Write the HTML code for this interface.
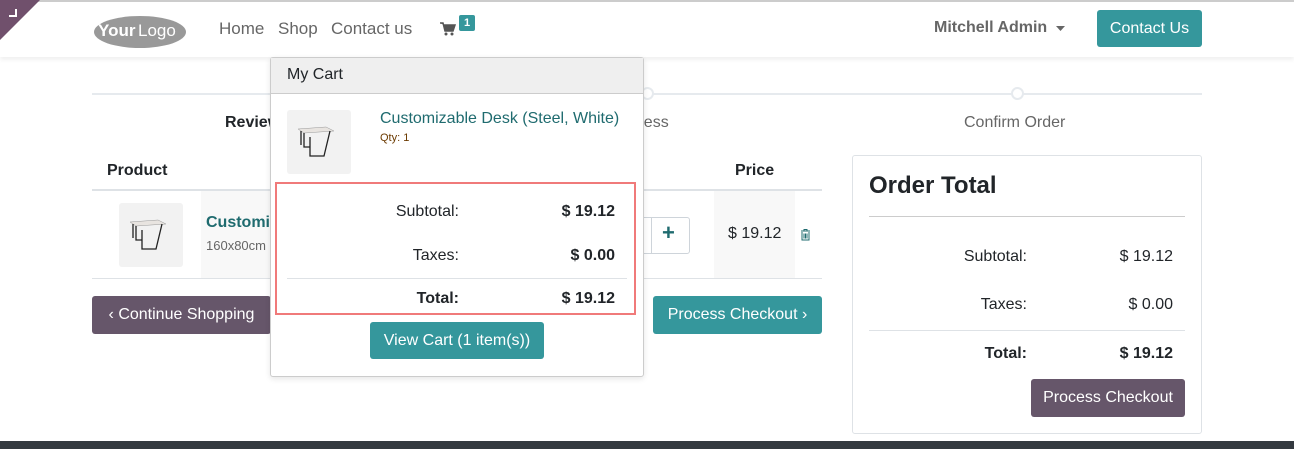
<!DOCTYPE html>
<html><head><meta charset="utf-8"><style>
*{box-sizing:border-box;margin:0;padding:0}
body{width:1294px;height:449px;overflow:hidden;background:#fff;font-family:"Liberation Sans","DejaVu Sans",sans-serif;color:#212529;position:relative;font-size:15px}
.a{position:absolute;white-space:nowrap}
.nav{position:absolute;left:0;top:0;width:1294px;height:57px;border-top:2px solid #ccc;box-shadow:0 3px 4px rgba(0,0,0,.06)}
.btn{position:absolute;color:#fff;border-radius:3px;display:flex;align-items:center;justify-content:center;font-size:16px}
.teal{background:#35979c}
.purp{background:#66566a}
.r{text-align:right}
</style></head><body>
<div class="nav"></div>
<svg class="a" style="left:0;top:0" width="40" height="40"><polygon points="0,0 40,0 0,40" fill="#70506c"/><path d="M16 9V16H9" stroke="#fff" stroke-width="2" fill="none"/></svg>
<svg class="a" style="left:92px;top:12px" width="96" height="38"><ellipse cx="48" cy="20" rx="46" ry="16" fill="#999"/><text x="6" y="24" font-family="Liberation Sans" font-size="17" font-weight="bold" fill="#fff">Your</text><text x="46" y="24" font-family="Liberation Sans" font-size="17" fill="#fff">Logo</text></svg>
<div class="a" style="left:219px;top:19px;font-size:17px;color:#666">Home</div>
<div class="a" style="left:278px;top:19px;font-size:17px;color:#666">Shop</div>
<div class="a" style="left:331px;top:19px;font-size:17px;color:#666">Contact us</div>
<svg class="a" style="left:440px;top:22px" width="16" height="14"><path d="M0 1H3L5 9H13L15 3H4" fill="#555" stroke="#555" stroke-width="1.5"/><circle cx="6" cy="12" r="1.5" fill="#555"/><circle cx="12" cy="12" r="1.5" fill="#555"/></svg>
<div class="a" style="left:459px;top:15px;width:16px;height:16px;background:#35979c;border-radius:2px;color:#fff;font-size:11px;font-weight:bold;text-align:center;line-height:16px">1</div>
<div class="a" style="left:934px;top:19px;font-size:16px;font-weight:bold;color:#666">Mitchell Admin</div>
<svg class="a" style="left:1056px;top:26px" width="10" height="6"><path d="M0 0H9L4.5 5Z" fill="#666"/></svg>
<div class="btn teal" style="left:1097px;top:10px;width:105px;height:37px">Contact Us</div>

<div class="a" style="left:92px;top:93px;width:1110px;height:2px;background:#e6eaee"></div>
<div class="a" style="left:641px;top:87px;width:13px;height:13px;border:2px solid #e6eaee;border-radius:50%;background:#fff"></div>
<div class="a" style="left:1011px;top:87px;width:13px;height:13px;border:2px solid #e6eaee;border-radius:50%;background:#fff"></div>
<div class="a" style="left:225px;top:114px;font-size:16px;font-weight:bold">Review Order</div>
<div class="a" style="left:610px;top:114px;font-size:16px;color:#666">Address</div>
<div class="a" style="left:964px;top:114px;font-size:16px;color:#666">Confirm Order</div>

<div class="a" style="left:107px;top:162px;font-size:16px;font-weight:bold">Product</div>
<div class="a" style="left:620px;top:162px;font-size:16px;font-weight:bold">ity</div>
<div class="a" style="left:735px;top:162px;font-size:16px;font-weight:bold">Price</div>
<div class="a" style="left:92px;top:189px;width:730px;height:2px;background:#dee2e6"></div>
<div class="a" style="left:201px;top:191px;width:80px;height:88px;background:#f8f8f8"></div>
<div class="a" style="left:714px;top:191px;width:81px;height:88px;background:#f8f8f8"></div>
<div class="a" style="left:119px;top:203px;width:64px;height:64px;background:#f2f2f2;border-radius:3px"></div>
<svg class="a" style="left:128px;top:218px" width="46" height="34"><path d="M2 4L30 2L38 6L8 8Z" fill="#e8e4e0" stroke="#999" stroke-width=".5"/><path d="M5 6V20M8 8V22H14M14 12V31H28L34 6" stroke="#222" stroke-width="1.3" fill="none"/></svg>
<div class="a" style="left:206px;top:214px;font-size:16px;font-weight:bold;color:#1f6b6f">Customiz</div>
<div class="a" style="left:206px;top:238px;font-size:13px;color:#666">160x80cm</div>
<div class="a" style="left:640px;top:217px;width:50px;height:37px;border:1px solid #ced4da;border-radius:0 3px 3px 0"></div>
<div class="a" style="left:651px;top:217px;width:1px;height:37px;background:#ced4da"></div>
<div class="a" style="left:662px;top:220px;font-size:22px;font-weight:bold;color:#1f6b6f">+</div>
<div class="a" style="left:728px;top:225px;font-size:16px">$ 19.12</div>
<svg class="a" style="left:800px;top:229px" width="11" height="12"><path d="M1 2H10M4 2V0.5H7V2M2 3V11H9V3M4 4.5V9.5M5.5 4.5V9.5M7 4.5V9.5" stroke="#1f6b6f" stroke-width="1" fill="none"/></svg>
<div class="a" style="left:92px;top:278px;width:730px;height:1px;background:#dee2e6"></div>
<div class="btn purp" style="left:92px;top:296px;width:179px;height:38px">‹ Continue Shopping</div>
<div class="btn teal" style="left:653px;top:296px;width:169px;height:38px">Process Checkout ›</div>

<div class="a" style="left:852px;top:155px;width:350px;height:279px;border:1px solid #dee2e6;border-radius:3px"></div>
<div class="a" style="left:869px;top:172px;font-size:24px;font-weight:bold">Order Total</div>
<div class="a" style="left:869px;top:216px;width:316px;height:1px;background:#ccc"></div>
<div class="a r" style="left:900px;top:248px;width:127px;font-size:16px">Subtotal:</div>
<div class="a r" style="left:1080px;top:248px;width:93px;font-size:16px">$ 19.12</div>
<div class="a r" style="left:900px;top:296px;width:127px;font-size:16px">Taxes:</div>
<div class="a r" style="left:1080px;top:296px;width:93px;font-size:16px">$ 0.00</div>
<div class="a" style="left:869px;top:330px;width:316px;height:1px;background:#dee2e6"></div>
<div class="a r" style="left:900px;top:345px;width:127px;font-size:16px;font-weight:bold">Total:</div>
<div class="a r" style="left:1080px;top:345px;width:93px;font-size:16px;font-weight:bold">$ 19.12</div>
<div class="btn purp" style="left:1031px;top:379px;width:154px;height:38px">Process Checkout</div>

<div class="a" style="left:0;top:441px;width:1294px;height:8px;background:#343a40"></div>

<div class="a" style="left:270px;top:57px;width:374px;height:320px;background:#fff;border:1px solid #ccc;border-radius:3px;box-shadow:0 2px 6px rgba(0,0,0,.1)"></div>
<div class="a" style="left:271px;top:58px;width:372px;height:36px;background:#efefef;border-bottom:1px solid #ccc"></div>
<div class="a" style="left:287px;top:66px;font-size:16px">My Cart</div>
<div class="a" style="left:287px;top:110px;width:64px;height:64px;background:#f2f2f2;border-radius:3px"></div>
<svg class="a" style="left:296px;top:125px" width="46" height="34"><path d="M2 4L30 2L38 6L8 8Z" fill="#e8e4e0" stroke="#999" stroke-width=".5"/><path d="M5 6V20M8 8V22H14M14 12V31H28L34 6" stroke="#222" stroke-width="1.3" fill="none"/></svg>
<div class="a" style="left:380px;top:110px;font-size:16px;color:#1f6b6f">Customizable Desk (Steel, White)</div>
<div class="a" style="left:380px;top:132px;font-size:11px;color:#6b3a00">Qty: 1</div>
<div class="a" style="left:287px;top:182px;width:340px;height:1px;background:#e6e6e6"></div>
<div class="a" style="left:275px;top:182px;width:361px;height:133px;border:2px solid #f07a7a"></div>
<div class="a r" style="left:300px;top:203px;width:159px;font-size:16px">Subtotal:</div>
<div class="a r" style="left:500px;top:203px;width:115px;font-size:16px;font-weight:bold">$ 19.12</div>
<div class="a r" style="left:300px;top:247px;width:159px;font-size:16px">Taxes:</div>
<div class="a r" style="left:500px;top:247px;width:115px;font-size:16px;font-weight:bold">$ 0.00</div>
<div class="a" style="left:287px;top:278px;width:340px;height:1px;background:#dee2e6"></div>
<div class="a r" style="left:300px;top:290px;width:159px;font-size:16px;font-weight:bold">Total:</div>
<div class="a r" style="left:500px;top:290px;width:115px;font-size:16px;font-weight:bold">$ 19.12</div>
<div class="btn teal" style="left:370px;top:322px;width:174px;height:37px">View Cart (1 item(s))</div>
</body></html>
